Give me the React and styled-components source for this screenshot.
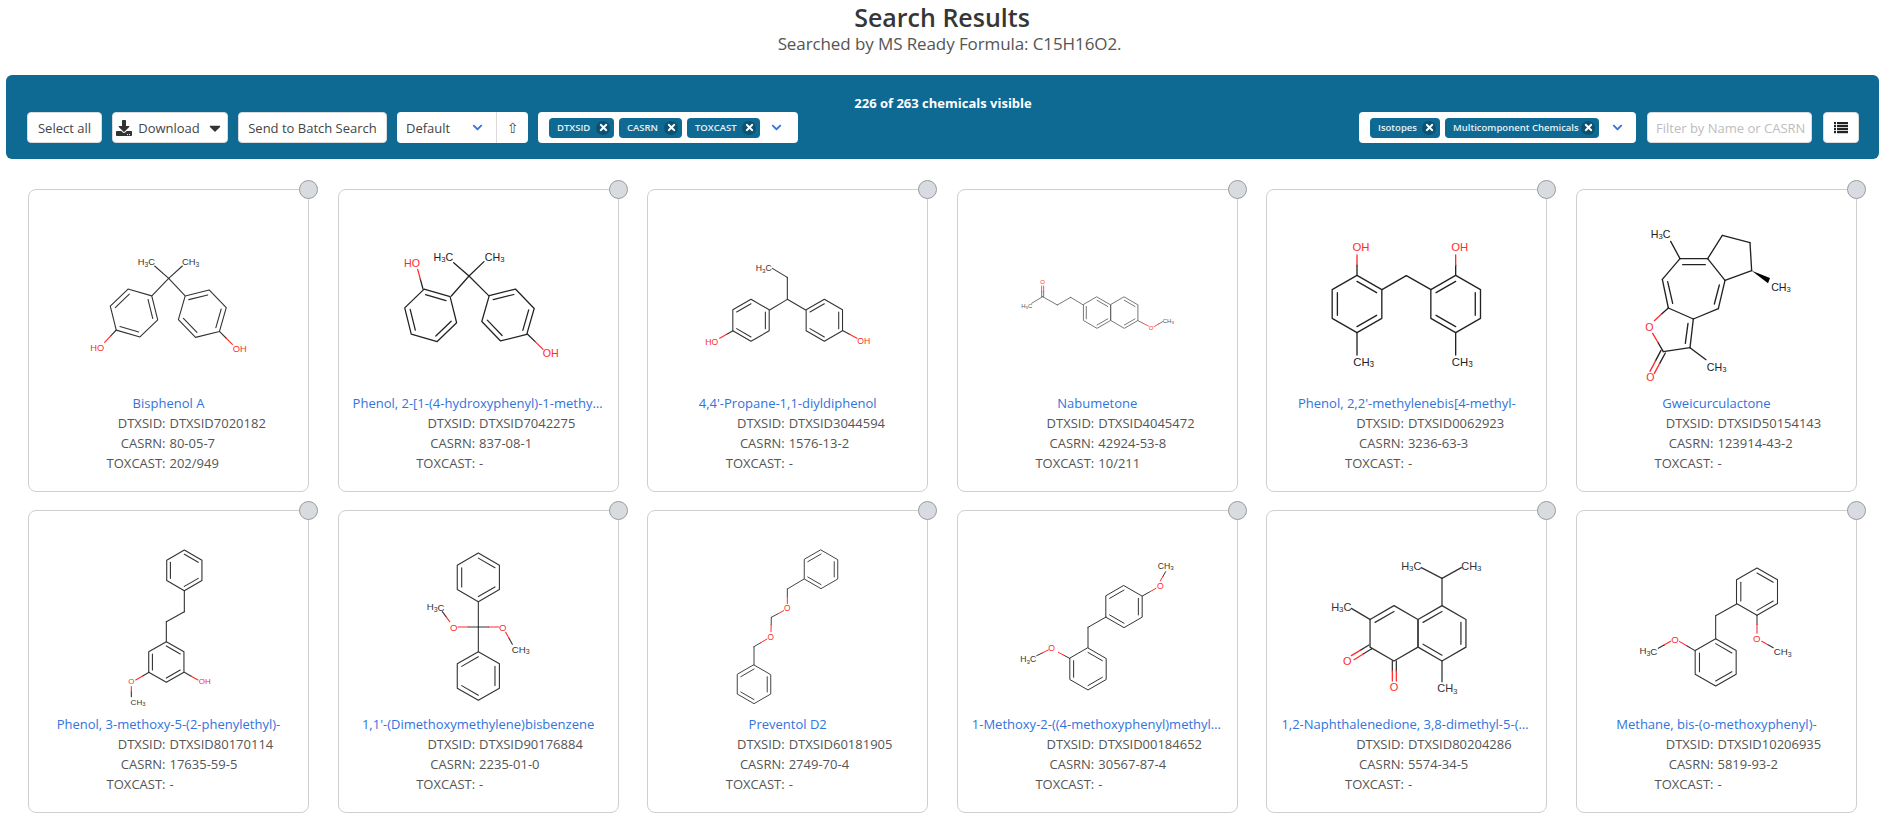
import React from 'react';
import styled, { createGlobalStyle } from 'styled-components';
import { FaCaretDown, FaChevronDown, FaDownload, FaTimes } from 'react-icons/fa';

const GlobalStyle = createGlobalStyle`
  html, body {
    margin: 0;
    padding: 0;
    background: #fff;
    overflow: hidden;
    font-family: "Open Sans", "Noto Sans", sans-serif;
    color: #555;
  }
`;

const Header = styled.header`
  height: 75px;
  text-align: center;
`;

const Title = styled.h1`
  margin: 0;
  font-size: 25px;
  font-weight: 600;
  line-height: 35px;
  color: #363636;
`;

const Subtitle = styled.p`
  margin: 0;
  padding-left: 15px;
  font-size: 17px;
  line-height: 18px;
  color: #555;
  letter-spacing: -0.1px;
`;

const Toolbar = styled.section`
  box-sizing: border-box;
  height: 84px;
  margin: 0 5px 0 6px;
  padding: 19px 20px 0 21px;
  background: #0e6993;
  border-radius: 6px;
`;

const Counter = styled.div`
  font-size: 13px;
  font-weight: 700;
  line-height: 18px;
  text-align: center;
  color: #fff;
`;

const ControlRow = styled.div`
  display: flex;
  justify-content: space-between;
`;

const ControlGroup = styled.div`
  display: flex;
  gap: ${p => p.$gap}px;
`;

const Button = styled.button`
  box-sizing: border-box;
  display: flex;
  align-items: center;
  justify-content: center;
  gap: 6px;
  width: ${p => p.$w}px;
  height: 31px;
  padding: 0;
  background: #fff;
  border: 1px solid #dbdbdb;
  border-radius: 4px;
  font-family: inherit;
  font-size: 13px;
  color: #444;
  svg {
    color: #333;
  }
`;

const SortControl = styled.div`
  display: flex;
  width: 131px;
  height: 31px;
  background: #fff;
  border-radius: 4px;
  font-size: 13px;
  color: #444;
`;

const SortSelect = styled.div`
  box-sizing: border-box;
  flex: 1;
  display: flex;
  align-items: center;
  justify-content: space-between;
  padding: 0 13px 0 9px;
  border-right: 1px solid #dbdbdb;
`;

const SortArrow = styled.div`
  width: 31px;
  display: flex;
  align-items: center;
  justify-content: center;
  font-family: "DejaVu Sans", sans-serif;
  font-size: 14px;
  color: #4a4a4a;
`;

const TagBox = styled.div`
  box-sizing: border-box;
  display: flex;
  align-items: center;
  gap: 5px;
  width: ${p => p.$w}px;
  height: 31px;
  padding: 0 0 0 11px;
  background: #fff;
  border-radius: 4px;
`;

const Tag = styled.span`
  box-sizing: border-box;
  display: flex;
  align-items: center;
  justify-content: space-between;
  width: ${p => p.$w}px;
  height: 20px;
  padding: 0 1px 0 8px;
  background: #0e6993;
  border-radius: 4px;
  font-size: 9.5px;
  font-weight: 600;
  color: #e8f1f5;
  white-space: nowrap;
`;

const TagClose = styled.span`
  display: flex;
  align-items: center;
  justify-content: center;
  width: 14px;
  height: 14px;
  margin-right: 3px;
  border-radius: 50%;
  background: rgba(10, 10, 10, 0.25);
  color: #fff;
  font-size: 11px;
`;

const Chevron = styled(FaChevronDown)`
  margin-left: ${p => p.$gap}px;
  color: #3273dc;
  font-size: 11px;
`;

const FilterInput = styled.input`
  box-sizing: border-box;
  width: 165px;
  height: 31px;
  padding: 0 4px 0 8px;
  background: #fff;
  border: 1px solid #dbdbdb;
  border-radius: 4px;
  font-family: inherit;
  font-size: 13px;
  outline: none;
  &::placeholder {
    color: #bdbdbd;
  }
`;

const CardGrid = styled.main`
  display: grid;
  grid-template-columns: repeat(6, 281px);
  grid-auto-rows: 303px;
  justify-content: space-between;
  row-gap: 18px;
  width: 1829px;
  margin: 30px 0 0 28px;
`;

const Card = styled.article`
  position: relative;
  box-sizing: border-box;
  background: #fff;
  border: 1px solid #cfcfcf;
  border-radius: 8px;
  font-size: 13px;
  line-height: 20px;
`;

const SelectDot = styled.span`
  position: absolute;
  top: -10px;
  right: -10px;
  box-sizing: border-box;
  width: 19px;
  height: 19px;
  background: #d8dce1;
  border: 1px solid #9a9a9a;
  border-radius: 50%;
`;

const Structure = styled.svg`
  display: block;
  width: 279px;
  height: 203px;
`;

const ChemName = styled.a`
  display: block;
  padding: 0 14px;
  color: #3273dc;
  text-align: center;
  white-space: nowrap;
  overflow: hidden;
  text-overflow: ellipsis;
`;

const InfoRow = styled.div`
  display: grid;
  grid-template-columns: 1fr 1fr;
`;

const InfoLabel = styled.span`
  padding-right: 3px;
  text-align: right;
`;

const InfoValue = styled.span`
  padding-left: 1px;
`;

const RED = '#ff2b2b';

const ringPoints = (cx, cy, r, a) =>
  [0, 1, 2, 3, 4, 5].map(i => {
    const t = ((a + i * 60) * Math.PI) / 180;
    return [cx + r * Math.cos(t), cy + r * Math.sin(t)];
  });

const Formula = ({ text, x, y, size, color }) => {
  const parts = text.split('3');
  return (
    <text x={x} y={y} fontSize={size} fill={color} textAnchor="middle" dominantBaseline="central"
      fontFamily='"Liberation Sans", sans-serif'>
      {parts.length === 1 ? text : (
        <>
          {parts[0]}
          <tspan fontSize={size * 0.72} dy={size * 0.2}>3</tspan>
          {parts[1] && <tspan dy={-size * 0.2}>{parts[1]}</tspan>}
        </>
      )}
    </text>
  );
};

const ListIcon = () => (
  <svg width="14" height="12" viewBox="0 0 14 12" fill="#222">
    {[0, 3, 6, 9].map(y => (
      <g key={y}>
        <rect x="0" y={y} width="2" height="2.2" />
        <rect x="3" y={y} width="11" height="2.2" />
      </g>
    ))}
  </svg>
);

const Molecule = ({ m }) => (
  <Structure viewBox={`${m.o[0]} ${m.o[1]} 837 609`}>
    <g fill="none" stroke={m.color} strokeWidth={m.sw} strokeLinecap="round" strokeLinejoin="round">
      {m.rings.map(([cx, cy, r, a, edges], i) => {
        const pts = ringPoints(cx, cy, r, a);
        return (
          <g key={i}>
            <polygon points={pts.map(p => p.join(',')).join(' ')} />
            {edges.map(e => {
              const p = pts[e];
              const q = pts[(e + 1) % 6];
              const k = 0.21;
              return (
                <line key={e} x1={p[0] + (cx - p[0]) * k} y1={p[1] + (cy - p[1]) * k}
                  x2={q[0] + (cx - q[0]) * k} y2={q[1] + (cy - q[1]) * k} />
              );
            })}
          </g>
        );
      })}
      {m.bonds.map(([x1, y1, x2, y2], i) => (
        <line key={i} x1={x1} y1={y1} x2={x2} y2={y2} />
      ))}
      {(m.hetero || []).map(([x1, y1, x2, y2], i) => {
        const mx = (x1 + x2) / 2;
        const my = (y1 + y2) / 2;
        return (
          <g key={i}>
            <line x1={x1} y1={y1} x2={mx} y2={my} />
            <line x1={mx} y1={my} x2={x2} y2={y2} stroke={RED} />
          </g>
        );
      })}
    </g>
    {m.wedge && <polygon points={m.wedge} fill="#000" />}
    {m.labels.map(([text, x, y], i) => (
      <Formula key={i} text={text} x={x} y={y} size={m.fs} color={text.includes('O') ? RED : m.color} />
    ))}
  </Structure>
);

// coordinates below are in 1/3 px, measured against each card
const chemicals = [
  {
    name: 'Bisphenol A', id: 'DTXSID7020182', cas: '80-05-7', tox: '202/949',
    mol: {
      o: [58, 150], sw: 3.3, fs: 28, color: '#333',
      rings: [[373, 519, 74, -44, [0, 2, 4]], [578, 521, 74, -134, [0, 2, 4]]],
      bonds: [[477, 415, 435, 378], [477, 415, 518, 378], [477, 415, 428, 466], [477, 415, 525, 466]],
      hetero: [[320, 570, 285, 607], [630, 575, 668, 613]],
      labels: [['H3C', 410, 366], ['CH3', 543, 366], ['HO', 263, 623], ['OH', 690, 627]],
    },
  },
  {
    name: 'Phenol, 2-[1-(4-hydroxyphenyl)-1-methylethyl]-', id: 'DTXSID7042275', cas: '837-08-1', tox: '-',
    mol: {
      o: [988, 150], sw: 3.8, fs: 32, color: '#222',
      rings: [[1263, 526, 81, -44, [1, 3, 5]], [1495, 525, 81, -134, [0, 2, 4]]],
      bonds: [[1378, 408, 1332, 368], [1378, 408, 1423, 365], [1378, 408, 1325, 468], [1378, 408, 1437, 467]],
      hetero: [[1240, 447, 1224, 388], [1553, 582, 1600, 628]],
      labels: [['H3C', 1301, 352], ['CH3', 1455, 352], ['HO', 1207, 368], ['OH', 1623, 640]],
    },
  },
  {
    name: "4,4'-Propane-1,1-diyldiphenol", id: 'DTXSID3044594', cas: '1576-13-2', tox: '-',
    mol: {
      o: [355, 150], sw: 3.2, fs: 26, color: '#333',
      rings: [[664, 541, 63, -90, [1, 3, 5]], [884, 541, 63, -90, [1, 3, 5]]],
      bonds: [[773, 478, 720, 510], [773, 478, 828, 510], [773, 478, 773, 412], [773, 412, 728, 385]],
      hetero: [[610, 572, 570, 595], [940, 572, 982, 595]],
      labels: [['H3C', 702, 385], ['HO', 546, 606], ['OH', 1002, 604]],
    },
  },
  {
    name: 'Nabumetone', id: 'DTXSID4045472', cas: '42924-53-8', tox: '10/211',
    mol: {
      o: [-276, 150], sw: 2.4, fs: 18, color: '#555',
      rings: [[141, 518, 47, -90, [0, 2, 4]], [223, 518, 47, -90, [0, 2]]],
      bonds: [[-55, 490, -22, 470], [-22, 470, 22, 495], [22, 495, 62, 472], [62, 472, 100, 495]],
      hetero: [[264, 542, 295, 558], [-25, 470, -25, 438], [-19, 470, -19, 438], [338, 545, 312, 560]],
      labels: [['O', -22, 425], ['H3C', -70, 497], ['O', 303, 565], ['CH3', 355, 543]],
    },
  },
  {
    name: "Phenol, 2,2'-methylenebis[4-methyl-", id: 'DTXSID0062923', cas: '3236-63-3', tox: '-',
    mol: {
      o: [652, 150], sw: 4, fs: 34, color: '#222',
      rings: [[922, 492, 86, -90, [0, 2, 4]], [1218, 492, 86, -90, [1, 3, 5]]],
      bonds: [[997, 449, 1070, 407], [1070, 407, 1144, 449], [922, 578, 922, 645], [1218, 578, 1218, 645]],
      hetero: [[922, 406, 922, 345], [1218, 406, 1218, 345]],
      labels: [['OH', 934, 322], ['OH', 1230, 322], ['CH3', 942, 666], ['CH3', 1238, 666]],
    },
  },
  {
    name: 'Gweicurculactone', id: 'DTXSID50154143', cas: '123914-43-2', tox: '-',
    mol: {
      o: [51, 60], sw: 4, fs: 32, color: '#222',
      rings: [],
      bonds: [
        [360, 266, 443, 266], [443, 266, 495, 331], [495, 331, 475, 416], [475, 416, 400, 447],
        [400, 447, 325, 414], [325, 414, 307, 328], [307, 328, 360, 266],
        [443, 266, 487, 196], [487, 196, 570, 218], [570, 218, 575, 302], [575, 302, 495, 331],
        [400, 447, 390, 533], [390, 533, 310, 545],
        [368, 284, 436, 284], [323, 335, 338, 400], [478, 345, 463, 402], [384, 460, 376, 520],
        [360, 266, 332, 214], [390, 533, 438, 569],
      ],
      hetero: [[325, 414, 283, 452], [310, 545, 278, 490], [303, 541, 270, 604], [316, 549, 283, 610]],
      wedge: '575,302 630,324 624,340',
      labels: [['H3C', 302, 192], ['CH3', 663, 351], ['CH3', 470, 591], ['O', 268, 472], ['O', 271, 621]],
    },
  },
  {
    name: 'Phenol, 3-methoxy-5-(2-phenylethyl)-', id: 'DTXSID80170114', cas: '17635-59-5', tox: '-',
    mol: {
      o: [58, 288], sw: 3.3, fs: 24, color: '#333',
      rings: [[524, 466, 61, -90, [0, 2, 4]], [470, 741, 61, -90, [0, 2, 4]]],
      bonds: [[524, 527, 524, 590], [524, 590, 470, 620], [470, 620, 470, 680]],
      hetero: [[524, 772, 565, 795], [418, 772, 378, 795], [365, 845, 365, 815]],
      labels: [['OH', 585, 800], ['O', 365, 800], ['CH3', 385, 862]],
    },
  },
  {
    name: "1,1'-(Dimethoxymethylene)bisbenzene", id: 'DTXSID90176884', cas: '2235-01-0', tox: '-',
    mol: {
      o: [988, 288], sw: 3.3, fs: 29, color: '#333',
      rings: [[1406, 487, 73, -90, [0, 2, 4]], [1406, 783, 73, -90, [1, 3, 5]]],
      bonds: [[1406, 560, 1406, 710]],
      hetero: [[1406, 636, 1345, 636], [1406, 636, 1467, 636], [1298, 590, 1320, 620], [1508, 688, 1488, 652]],
      labels: [['O', 1332, 636], ['O', 1479, 636], ['H3C', 1278, 575], ['CH3', 1533, 702]],
    },
  },
  {
    name: 'Preventol D2', id: 'DTXSID60181905', cas: '2749-70-4', tox: '-',
    mol: {
      o: [355, 288], sw: 3, fs: 25, color: '#444',
      rings: [[874, 463, 58, -90, [1, 3, 5]], [673, 808, 58, -90, [1, 3, 5]]],
      bonds: [[823, 492, 773, 522], [673, 695, 673, 750]],
      hetero: [[773, 522, 773, 566], [725, 607, 762, 587], [725, 607, 724, 650], [673, 695, 712, 672]],
      labels: [['O', 773, 580], ['O', 723, 665]],
    },
  },
  {
    name: '1-Methoxy-2-((4-methoxyphenyl)methyl)benzene', id: 'DTXSID00184652', cas: '30567-87-4', tox: '-',
    mol: {
      o: [-276, 288], sw: 3, fs: 26, color: '#333',
      rings: [[222, 575, 63, -90, [1, 3, 5]], [114, 762, 63, -90, [0, 2, 4]]],
      bonds: [[168, 606, 114, 637], [114, 637, 114, 698]],
      hetero: [[277, 543, 318, 520], [347, 470, 331, 498], [59, 730, 25, 712], [-40, 722, -5, 705]],
      labels: [['O', 331, 513], ['CH3', 347, 452], ['O', 5, 698], ['H3C', -65, 732]],
    },
  },
  {
    name: '1,2-Naphthalenedione, 3,8-dimethyl-5-(1-methylethyl)-', id: 'DTXSID80204286', cas: '5574-34-5', tox: '-',
    mol: {
      o: [652, 288], sw: 3.8, fs: 33, color: '#333',
      rings: [[1177, 655, 83, -90, [1, 3, 5]], [1033, 655, 83, -90, [5]]],
      bonds: [[1177, 572, 1177, 490], [1177, 490, 1115, 458], [1177, 490, 1235, 458], [962, 614, 905, 580], [1177, 738, 1177, 800]],
      hetero: [[958, 690, 905, 722], [966, 701, 913, 734], [1028, 738, 1028, 798], [1040, 738, 1040, 798]],
      labels: [['H3C', 1085, 452], ['CH3', 1265, 452], ['H3C', 875, 575], ['O', 893, 737], ['O', 1033, 817], ['CH3', 1193, 820]],
    },
  },
  {
    name: 'Methane, bis-(o-methoxyphenyl)-', id: 'DTXSID10206935', cas: '5819-93-2', tox: '-',
    mol: {
      o: [51, 1023], sw: 3.2, fs: 29, color: '#333',
      rings: [[591, 1265, 71, -90, [0, 2, 4]], [467, 1477, 71, -90, [0, 2, 4]]],
      bonds: [[530, 1302, 467, 1337], [467, 1337, 467, 1406]],
      hetero: [[591, 1336, 591, 1390], [405, 1442, 358, 1414], [640, 1433, 605, 1414], [295, 1435, 332, 1414]],
      labels: [['O', 590, 1406], ['CH3', 668, 1445], ['O', 345, 1408], ['H3C', 265, 1442]],
    },
  },
];

const TagItem = ({ label, w }) => (
  <Tag $w={w}>
    {label}
    <TagClose><FaTimes /></TagClose>
  </Tag>
);

const ChemicalCard = ({ chem }) => (
  <Card>
    <SelectDot />
    <Molecule m={chem.mol} />
    <ChemName>{chem.name}</ChemName>
    <InfoRow><InfoLabel>DTXSID:</InfoLabel><InfoValue>{chem.id}</InfoValue></InfoRow>
    <InfoRow><InfoLabel>CASRN:</InfoLabel><InfoValue>{chem.cas}</InfoValue></InfoRow>
    <InfoRow><InfoLabel>TOXCAST:</InfoLabel><InfoValue>{chem.tox}</InfoValue></InfoRow>
  </Card>
);

export default function App() {
  return (
    <>
      <GlobalStyle />
      <Header>
        <Title>Search Results</Title>
        <Subtitle>Searched by MS Ready Formula: C15H16O2.</Subtitle>
      </Header>
      <Toolbar>
        <Counter>226 of 263 chemicals visible</Counter>
        <ControlRow>
          <ControlGroup $gap={10}>
            <Button $w={75}>Select all</Button>
            <Button $w={116}><FaDownload size={16} />Download<FaCaretDown size={18} /></Button>
            <Button $w={149}>Send to Batch Search</Button>
            <SortControl>
              <SortSelect>Default<FaChevronDown color="#3273dc" size={11} /></SortSelect>
              <SortArrow>⇧</SortArrow>
            </SortControl>
            <TagBox $w={260}>
              <TagItem label="DTXSID" w={65} />
              <TagItem label="CASRN" w={63} />
              <TagItem label="TOXCAST" w={73} />
              <Chevron $gap={6} />
            </TagBox>
          </ControlGroup>
          <ControlGroup $gap={11}>
            <TagBox $w={277}>
              <TagItem label="Isotopes" w={70} />
              <TagItem label="Multicomponent Chemicals" w={154} />
              <Chevron $gap={8} />
            </TagBox>
            <FilterInput placeholder="Filter by Name or CASRN" />
            <Button $w={36}><ListIcon /></Button>
          </ControlGroup>
        </ControlRow>
      </Toolbar>
      <CardGrid>
        {chemicals.map(chem => <ChemicalCard key={chem.id} chem={chem} />)}
      </CardGrid>
    </>
  );
}
